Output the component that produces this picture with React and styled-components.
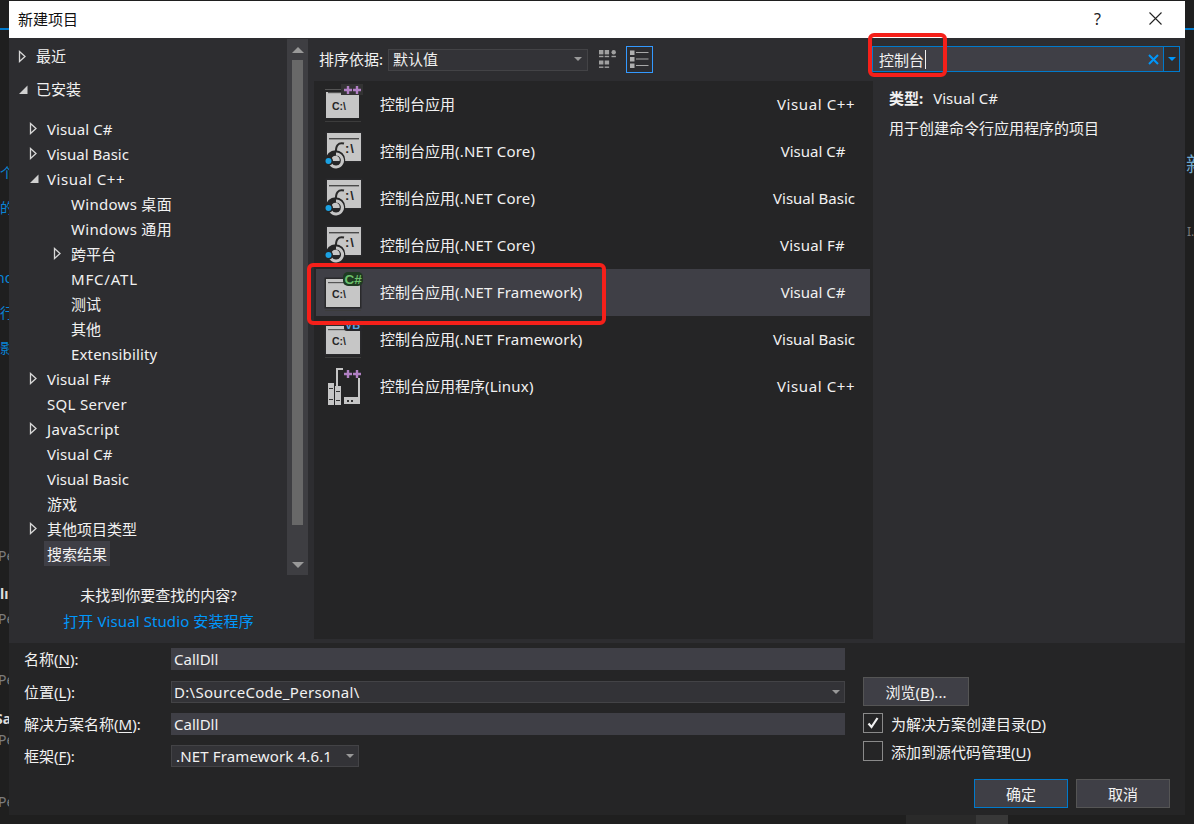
import React from "react";
import styled, { createGlobalStyle } from "styled-components";

const Global = createGlobalStyle`
  html, body { margin: 0; padding: 0; background: #1f1f1f; }
  * { box-sizing: border-box; }
  body { font-family: "Noto Sans", "Noto Sans CJK SC", sans-serif; font-size: 15px; color: #f1f1f1; }
`;

const Page = styled.div`
  position: relative;
  width: 1194px;
  height: 824px;
  overflow: hidden;
  background: #1f1f1f;
  padding: 1px 9px 9px;
`;
const BackLine = styled.div`
  position: absolute;
  top: 28px;
  height: 2px;
  width: 9px;
  left: ${(p) => p.$x}px;
  background: #007acc;
`;
const BackText = styled.span`
  position: absolute;
  left: ${(p) => p.$x}px;
  top: ${(p) => p.$y}px;
  font-size: ${(p) => p.$size || 14}px;
  font-weight: ${(p) => (p.$bold ? 700 : 400)};
  color: ${(p) => p.$color || "#7c7c7c"};
  line-height: 20px;
  white-space: nowrap;
`;
const BackPatch = styled.div`
  position: absolute;
  left: ${(p) => p.$x}px;
  top: 815px;
  height: 9px;
  width: ${(p) => p.$w}px;
  background: ${(p) => p.$c};
`;

const Dialog = styled.div`
  position: relative;
  width: 1176px;
  height: 814px;
  background: #2d2d30;
  display: flex;
  flex-direction: column;
`;
const TitleBar = styled.header`
  height: 37px;
  background: #fff;
  color: #111;
  display: flex;
  align-items: center;
  padding: 0 23px 2px 9px;
  flex: none;
`;
const Title = styled.h1`
  margin: 0;
  font-size: 15px;
  font-weight: 400;
  flex: 1;
`;
const HelpMark = styled.span`
  font-size: 16px;
  margin-right: 48px;
  color: #222;
`;
const Main = styled.div`
  display: flex;
  height: 605px;
  flex: none;
`;
const LeftPanel = styled.nav`
  width: 305px;
  flex: none;
  display: flex;
  flex-direction: column;
`;
const TreeArea = styled.div`
  display: flex;
  height: 537px;
  width: 299px;
`;
const Tree = styled.div`
  flex: 1;
  padding-top: 6px;
`;
const TreeRow = styled.div`
  height: 25px;
  display: flex;
  position: relative;
  padding-left: ${(p) => p.$indent}px;
  margin-top: ${(p) => p.$gap || 0}px;
  white-space: nowrap;
`;
const Arrow = styled.svg`
  position: absolute;
  left: ${(p) => p.$indent - 18}px;
  top: 6px;
`;
const TreeLabel = styled.span`
  display: block;
  height: 25px;
  line-height: ${(p) => (p.$root ? 25 : 26)}px;
  letter-spacing: ${(p) => p.$ls || 0}px;
  background: ${(p) => (p.$on ? "#3f3f46" : "transparent")};
  margin-left: ${(p) => (p.$on ? -3 : 0)}px;
  padding: ${(p) => (p.$on ? "0 3px" : 0)};
`;
const Scrollbar = styled.div`
  width: 21px;
  margin-top: 1px;
  background: #3e3e42;
  display: flex;
  flex-direction: column;
  align-items: center;
  padding: 8px 0 7px;
`;
const ScrollThumb = styled.div`
  width: 11px;
  height: 465px;
  margin: 7px 0 auto;
  background: #686868;
`;
const ScrollArrow = styled.div`
  width: 0;
  height: 0;
  border-left: 6px solid transparent;
  border-right: 6px solid transparent;
  ${(p) => (p.$up ? "border-bottom: 6px solid #999;" : "border-top: 6px solid #999;")}
`;
const HelpBlock = styled.div`
  width: 299px;
  text-align: center;
  padding-top: 7px;
`;
const HelpLine = styled.div`
  height: 26px;
  line-height: 26px;
  letter-spacing: ${(p) => (p.$link ? 0.1 : 0)}px;
  color: ${(p) => (p.$link ? "#0097fb" : "#f1f1f1")};
`;

const Center = styled.section`
  width: 559px;
  flex: none;
  display: flex;
  flex-direction: column;
  height: 601px;
`;
const Toolbar = styled.div`
  height: 43px;
  display: flex;
  align-items: center;
  padding-left: 5px;
  flex: none;
`;
const ToolLabel = styled.span`
  width: 69px;
  flex: none;
  padding-bottom: 2px;
`;
const SortSelect = styled.div`
  width: 200px;
  height: 22px;
  background: #333337;
  border: 1px solid #434346;
  display: flex;
  align-items: center;
  justify-content: space-between;
  padding: 0 5px 2px 4px;
`;
const Caret = styled.span`
  width: 0;
  height: 0;
  border-left: 4px solid transparent;
  border-right: 4px solid transparent;
  border-top: 4px solid #999;
`;
const ViewToggle = styled.span`
  width: 27px;
  height: 27px;
  display: flex;
  align-items: center;
  justify-content: center;
  border: 1px solid ${(p) => (p.$active ? "#3399ff" : "transparent")};
  margin-left: ${(p) => p.$ml}px;
`;
const List = styled.div`
  flex: 1;
  background: #252526;
  padding: 0 3px 0 2px;
`;
const ListRow = styled.div`
  height: 47px;
  display: flex;
  align-items: center;
  background: ${(p) => (p.$selected ? "#3f3f46" : "transparent")};
`;
const RowIcon = styled.svg`
  width: 40px;
  height: 47px;
  margin-left: 8px;
  flex: none;
`;
const RowName = styled.span`
  margin-left: 16px;
  flex: 1;
  padding-bottom: 2px;
`;
const RowLang = styled.span`
  width: 110px;
  text-align: center;
  flex: none;
  padding: 0 ${(p) => p.$pr}px 2px ${(p) => p.$pl}px;
`;
const Spaced = styled.span`
  letter-spacing: ${(p) => p.$ls}px;
`;

const RightPanel = styled.aside`
  flex: 1;
  display: flex;
  flex-direction: column;
`;
const SearchBox = styled.div`
  width: 308px;
  height: 26px;
  margin: 8px 0 0 -1px;
  border: 1px solid #007acc;
  background: #3f3f46;
  display: flex;
  align-items: center;
  padding-left: 6px;
`;
const SearchText = styled.span`
  flex: 1;
  display: flex;
  align-items: center;
`;
const TextCursor = styled.i`
  display: block;
  width: 1px;
  height: 19px;
  background: #f1f1f1;
  margin-left: 1px;
`;
const SearchX = styled.svg`
  margin-right: 4px;
  flex: none;
`;
const SearchDrop = styled.span`
  width: 16px;
  height: 100%;
  border-left: 1px solid #007acc;
  background: #2d2d30;
  display: flex;
  align-items: center;
  justify-content: center;
`;
const BlueCaret = styled(Caret)`
  border-top-color: #0097fb;
`;
const Info = styled.div`
  padding: 11px 0 0 16px;
`;
const InfoLine = styled.div`
  height: 30px;
  line-height: 30px;
`;
const InfoKey = styled.b`
  font-weight: 700;
  margin-right: 10px;
`;

const Footer = styled.footer`
  flex: 1;
  background: #252526;
  display: flex;
  padding-left: 15px;
`;
const FormCol = styled.div`
  width: 821px;
  flex: none;
  padding-top: 5px;
`;
const FormRow = styled.div`
  display: flex;
  align-items: center;
  height: 22px;
  margin-bottom: ${(p) => p.$gap}px;
`;
const FormLabel = styled.label`
  width: 147px;
  flex: none;
  padding-bottom: 2px;
  u { text-underline-offset: 2px; }
`;
const Field = styled.div`
  width: ${(p) => p.$w || 674}px;
  height: 22px;
  background: ${(p) => (p.$box ? "#333337" : "#3f3f46")};
  border: ${(p) => (p.$box ? "1px solid #434346" : "none")};
  padding: 0 ${(p) => (p.$box ? 4 : 3)}px ${(p) => (p.$box ? 0 : 1)}px ${(p) => (p.$box ? 2 : 3)}px;
  display: flex;
  align-items: center;
  justify-content: space-between;
`;
const FieldText = styled.span`
  padding-left: ${(p) => p.$pl || 0}px;
  letter-spacing: ${(p) => p.$ls || 0}px;
`;
const SideCol = styled.div`
  flex: 1;
  padding: 34px 15px 0 18px;
  display: flex;
  flex-direction: column;
  align-items: flex-start;
`;
const Button = styled.button`
  font: inherit;
  color: #f1f1f1;
  width: ${(p) => p.$w}px;
  height: 29px;
  padding: 0;
  background: #3f3f46;
  border: 1px solid ${(p) => (p.$primary ? "#007acc" : "#555")};
  u { text-underline-offset: 2px; }
`;
const CheckRow = styled.div`
  display: flex;
  align-items: center;
  height: 20px;
  margin-top: ${(p) => p.$mt}px;
`;
const CheckBox = styled.span`
  width: 20px;
  height: 20px;
  border: 1px solid #8a8a8a;
  margin-right: 8px;
  display: flex;
  align-items: center;
  justify-content: center;
`;
const CheckLabel = styled.span`
  u { text-underline-offset: 2px; }
`;
const Actions = styled.div`
  margin-top: 18px;
  display: flex;
  gap: 8px;
  align-self: flex-end;
`;
const RedMark = styled.div`
  position: absolute;
  left: ${(p) => p.$x}px;
  top: ${(p) => p.$y}px;
  width: ${(p) => p.$w}px;
  height: ${(p) => p.$h}px;
  border: 4px solid #f5201a;
  border-radius: 6px;
  pointer-events: none;
`;

const CollapsedArrow = ({ indent }) => (
  <Arrow $indent={indent} width="9" height="13" viewBox="0 0 9 13">
    <path d="M1.5 1.5 L7 6.5 L1.5 11.5 Z" fill="none" stroke="#d8d8d8" strokeWidth="1.3" />
  </Arrow>
);
const ExpandedArrow = ({ indent }) => (
  <Arrow $indent={indent} width="11" height="13" viewBox="0 0 11 13">
    <path d="M9.5 2.5 V11 H1 Z" fill="#d0d0d0" />
  </Arrow>
);

const cText = { fontFamily: "'Liberation Sans', sans-serif", fontWeight: 700, fill: "#262626" };

const Window = ({ x, y, w, h, outline = true, titleY }) => (
  <g>
    {outline && <rect x={x - 1.5} y={y - 1.5} width={w + 3} height={h + 3} fill="#2a2a2c" />}
    <rect x={x} y={y} width={w} height={h} fill="#c6c6c6" />
    {titleY != null && <rect x={x + 2} y={titleY} width={w - 4} height="1.4" fill="#4a4a4a" />}
  </g>
);
const Plus = ({ cx, cy }) => (
  <path d={`M${cx - 4} ${cy - 1.2}h2.8v-2.8h2.4v2.8h2.8v2.4h-2.8v2.8h-2.4v-2.8h-2.8z`} fill="#b180c4" />
);

const CppIcon = () => (
  <RowIcon viewBox="0 0 40 47">
    <rect x="1" y="8" width="20" height="1" fill="#555" />
    <rect x="1" y="40" width="36" height="1" fill="#3c3c3c" />
    <Window x={2} y={11} w={33} h={26} outline={false} />
    <rect x="4" y="11" width="28" height="1.2" fill="#555" />
    <rect x="17" y="3" width="22" height="11" fill="#333" />
    <Plus cx={24} cy={9} />
    <Plus cx={33} cy={9} />
    <text x="8" y="29" fontSize="10.5" style={cText}>C:\</text>
  </RowIcon>
);
const CoreIcon = () => (
  <RowIcon viewBox="0 0 40 47">
    <Window x={3} y={5} w={34} h={28} titleY={10} />
    <text x="21" y="25" fontSize="13" letterSpacing="1" style={cText}>:\</text>
    <path d="M20 15.5 C14 14 11.5 18 12 25" fill="none" stroke="#2a2a2a" strokeWidth="2" />
    <circle cx="11.5" cy="32" r="7" fill="none" stroke="#252526" strokeWidth="5.5" />
    <path d="M12 26 A6.5 6.5 0 1 1 6.5 36" fill="none" stroke="#c6c6c6" strokeWidth="3" />
    <circle cx="4.5" cy="33" r="4.5" fill="#252526" />
    <circle cx="4.5" cy="33" r="3" fill="#1ba1e2" />
  </RowIcon>
);
const FrameworkIcon = ({ badge }) => (
  <RowIcon viewBox="0 0 40 47">
    <Window x={2} y={10} w={34} h={28} />
    <rect x="4" y="13" width="24" height="1.2" fill="#555" />
    <rect x="1" y="41" width="36" height="1" fill="#3c3c3c" />
    <text x="8" y="29" fontSize="10.5" style={cText}>C:\</text>
    {badge === "cs" && (
      <g>
        <rect x="19" y="3" width="20" height="14" rx="5" fill="#1f3a22" />
        <text x="20.5" y="14.5" fontSize="13.5" fontWeight="700" fontFamily="'Liberation Sans', sans-serif" fill="#6cc06c">C#</text>
      </g>
    )}
    {badge === "vb" && (
      <g>
        <rect x="20" y="3" width="19" height="12" rx="3" fill="#26262a" />
        <text x="21" y="12.5" fontSize="11" fontWeight="700" fontFamily="'Liberation Sans', sans-serif" fill="#5aa5e0">VB</text>
      </g>
    )}
  </RowIcon>
);
const LinuxIcon = () => (
  <RowIcon viewBox="0 0 40 47">
    <path d="M13 24 V6 H19" fill="none" stroke="#c6c6c6" strokeWidth="2" />
    <rect x="34" y="15" width="2" height="19" fill="#c6c6c6" />
    <rect x="20" y="34" width="16" height="7" fill="#c6c6c6" />
    <rect x="23" y="37" width="2" height="2" fill="#333" />
    <rect x="27" y="37" width="2" height="2" fill="#333" />
    <rect x="4" y="20" width="6" height="22" fill="#c6c6c6" />
    <rect x="11" y="23" width="6" height="19" fill="#c6c6c6" />
    <rect x="5" y="25" width="4" height="1" fill="#333" />
    <rect x="5" y="36" width="4" height="1" fill="#333" />
    <rect x="12" y="28" width="4" height="1" fill="#333" />
    <rect x="12" y="37" width="4" height="1" fill="#333" />
    <Plus cx={24} cy={11} />
    <Plus cx={33} cy={11} />
  </RowIcon>
);

const GridViewIcon = () => (
  <svg width="17" height="19" viewBox="0 0 17 19" fill="#a0a0a0">
    {[0, 5.7].map((x) => (
      <g key={x}>
        <rect x={x} y="0" width="4.4" height="4.4" />
        <rect x={x} y="5.8" width="4.4" height="1.4" />
        <rect x={x} y="10.5" width="4.4" height="4" />
        <rect x={x} y="16.5" width="4.4" height="1.4" />
      </g>
    ))}
    <circle cx="14.7" cy="2.2" r="2.2" />
    <rect x="12.5" y="5.8" width="4.4" height="1.4" />
  </svg>
);
const ListViewIcon = () => (
  <svg width="19" height="19" viewBox="0 0 19 19">
    {[0.5, 7, 13.5].map((y) => (
      <g key={y}>
        <rect x="0" y={y} width="4.5" height="4.5" fill="#b0b0b0" />
        <rect x="6" y={y + 1.5} width="12.5" height="1" fill="#a8a8a8" />
      </g>
    ))}
  </svg>
);

const tree = [
  { t: "Visual C#", i: 38, a: "c", ls: 0.1 },
  { t: "Visual Basic", i: 38, a: "c" },
  { t: "Visual C++", i: 38, a: "e", ls: 0.6 },
  { t: "Windows 桌面", i: 62, ls: 0.3 },
  { t: "Windows 通用", i: 62, ls: 0.3 },
  { t: "跨平台", i: 62, a: "c" },
  { t: "MFC/ATL", i: 62, ls: 0.8 },
  { t: "测试", i: 62 },
  { t: "其他", i: 62 },
  { t: "Extensibility", i: 62, ls: 0.15 },
  { t: "Visual F#", i: 38, a: "c", ls: 0.1 },
  { t: "SQL Server", i: 38, ls: 0.3 },
  { t: "JavaScript", i: 38, a: "c", ls: 0.4 },
  { t: "Visual C#", i: 38, ls: 0.1 },
  { t: "Visual Basic", i: 38 },
  { t: "游戏", i: 38 },
  { t: "其他项目类型", i: 38, a: "c" },
  { t: "搜索结果", i: 38, on: true },
];

const rows = [
  { n: "控制台应用", l: "Visual C++", ll: 0.6, pl: 2, pr: 0, icon: <CppIcon /> },
  { n: "控制台应用", s: "(.NET Core)", l: "Visual C#", pl: 0, pr: 4, icon: <CoreIcon /> },
  { n: "控制台应用", s: "(.NET Core)", l: "Visual Basic", pl: 0, pr: 2, icon: <CoreIcon /> },
  { n: "控制台应用", s: "(.NET Core)", l: "Visual F#", ll: 0.2, pl: 0, pr: 5, icon: <CoreIcon /> },
  { n: "控制台应用", s: "(.NET Framework)", l: "Visual C#", pl: 0, pr: 4, icon: <FrameworkIcon badge="cs" />, sel: true },
  { n: "控制台应用", s: "(.NET Framework)", l: "Visual Basic", pl: 0, pr: 2, icon: <FrameworkIcon badge="vb" /> },
  { n: "控制台应用程序", s: "(Linux)", l: "Visual C++", ll: 0.6, pl: 2, pr: 0, icon: <LinuxIcon /> },
];

const backTexts = [
  ["个", 0, 163, "#0a84d6"], ["的", 0, 198, "#0a84d6"], ["nd", -4, 268, "#0a84d6"], ["行", 0, 303, "#0a84d6"], ["影", 0, 338, "#0a84d6"],
  ["Pe", -2, 546], ["Pe", -2, 609], ["Pe", -2, 670], ["Pe", -2, 730], ["Pe", -2, 792],
];

export default function App() {
  return (
    <Page>
      <Global />
      <BackLine $x={0} />
      <BackLine $x={1185} />
      {backTexts.map(([t, x, y, c]) => (
        <BackText key={`${t}${y}`} $x={x} $y={y} $color={c}>{t}</BackText>
      ))}
      <BackText $x={0} $y={584} $bold $color="#ddd">lı</BackText>
      <BackText $x={-5} $y={709} $bold $color="#ddd">Sa</BackText>
      <BackText $x={1186} $y={155} $size={20} $color="#6fa8cf">新</BackText>
      <BackText $x={1187} $y={222} $size={12}>I.</BackText>
      <BackPatch $x={906} $w={70} $c="#2a2a2a" />
      <BackPatch $x={976} $w={32} $c="#383838" />

      <Dialog>
        <TitleBar>
          <Title>新建项目</Title>
          <HelpMark>?</HelpMark>
          <svg width="13" height="13" viewBox="0 0 13 13">
            <path d="M.5.5l12 12M12.5.5l-12 12" stroke="#222" strokeWidth="1.1" fill="none" />
          </svg>
        </TitleBar>
        <Main>
          <LeftPanel>
            <TreeArea>
              <Tree>
                <TreeRow $indent={27}><CollapsedArrow indent={27} /><TreeLabel $root>最近</TreeLabel></TreeRow>
                <TreeRow $indent={27} $gap={8}><ExpandedArrow indent={27} /><TreeLabel $root>已安装</TreeLabel></TreeRow>
                {tree.map((r, idx) => (
                  <TreeRow key={idx} $indent={r.i} $gap={idx === 0 ? 14 : 0}>
                    {r.a === "c" && <CollapsedArrow indent={r.i} />}
                    {r.a === "e" && <ExpandedArrow indent={r.i} />}
                    <TreeLabel $on={r.on} $ls={r.ls}>{r.t}</TreeLabel>
                  </TreeRow>
                ))}
              </Tree>
              <Scrollbar>
                <ScrollArrow $up />
                <ScrollThumb />
                <ScrollArrow />
              </Scrollbar>
            </TreeArea>
            <HelpBlock>
              <HelpLine>未找到你要查找的内容?</HelpLine>
              <HelpLine $link>打开 Visual Studio 安装程序</HelpLine>
            </HelpBlock>
          </LeftPanel>
          <Center>
            <Toolbar>
              <ToolLabel>排序依据:</ToolLabel>
              <SortSelect>默认值<Caret /></SortSelect>
              <ViewToggle $ml={6}><GridViewIcon /></ViewToggle>
              <ViewToggle $ml={5} $active><ListViewIcon /></ViewToggle>
            </Toolbar>
            <List>
              {rows.map((r, i) => (
                <ListRow key={i} $selected={r.sel}>
                  {r.icon}
                  <RowName>{r.n}<Spaced $ls={0.2}>{r.s}</Spaced></RowName>
                  <RowLang $pl={r.pl} $pr={r.pr}><Spaced $ls={r.ll || 0}>{r.l}</Spaced></RowLang>
                </ListRow>
              ))}
            </List>
          </Center>
          <RightPanel>
            <SearchBox>
              <SearchText>控制台<TextCursor /></SearchText>
              <SearchX width="11" height="11" viewBox="0 0 11 11">
                <path d="M1 1l9 9M10 1l-9 9" stroke="#0097fb" strokeWidth="2" fill="none" />
              </SearchX>
              <SearchDrop><BlueCaret /></SearchDrop>
            </SearchBox>
            <Info>
              <InfoLine><InfoKey>类型:</InfoKey>Visual C#</InfoLine>
              <InfoLine>用于创建命令行应用程序的项目</InfoLine>
            </Info>
          </RightPanel>
        </Main>
        <Footer>
          <FormCol>
            <FormRow $gap={11}>
              <FormLabel>名称(<u>N</u>):</FormLabel>
              <Field><FieldText>CallDll</FieldText></Field>
            </FormRow>
            <FormRow $gap={10}>
              <FormLabel>位置(<u>L</u>):</FormLabel>
              <Field $box><FieldText $ls={0.3}>D:\SourceCode_Personal\</FieldText><Caret /></Field>
            </FormRow>
            <FormRow $gap={10}>
              <FormLabel>解决方案名称(<u>M</u>):</FormLabel>
              <Field><FieldText>CallDll</FieldText></Field>
            </FormRow>
            <FormRow $gap={0}>
              <FormLabel>框架(<u>F</u>):</FormLabel>
              <Field $box $w={188}><FieldText $pl={2} $ls={0.15}>.NET Framework 4.6.1</FieldText><Caret /></Field>
            </FormRow>
          </FormCol>
          <SideCol>
            <Button $w={106}>浏览(<u>B</u>)...</Button>
            <CheckRow $mt={7}>
              <CheckBox>
                <svg width="12" height="12" viewBox="0 0 12 12">
                  <path d="M1.5 6.5l3 3.5 6-9" stroke="#f1f1f1" strokeWidth="2.2" fill="none" />
                </svg>
              </CheckBox>
              <CheckLabel>为解决方案创建目录(<u>D</u>)</CheckLabel>
            </CheckRow>
            <CheckRow $mt={8}>
              <CheckBox />
              <CheckLabel>添加到源代码管理(<u>U</u>)</CheckLabel>
            </CheckRow>
            <Actions>
              <Button $w={94} $primary>确定</Button>
              <Button $w={94}>取消</Button>
            </Actions>
          </SideCol>
        </Footer>
        <RedMark $x={298} $y={262} $w={299} $h={62} />
        <RedMark $x={859} $y={32} $w={79} $h={44} />
      </Dialog>
    </Page>
  );
}
